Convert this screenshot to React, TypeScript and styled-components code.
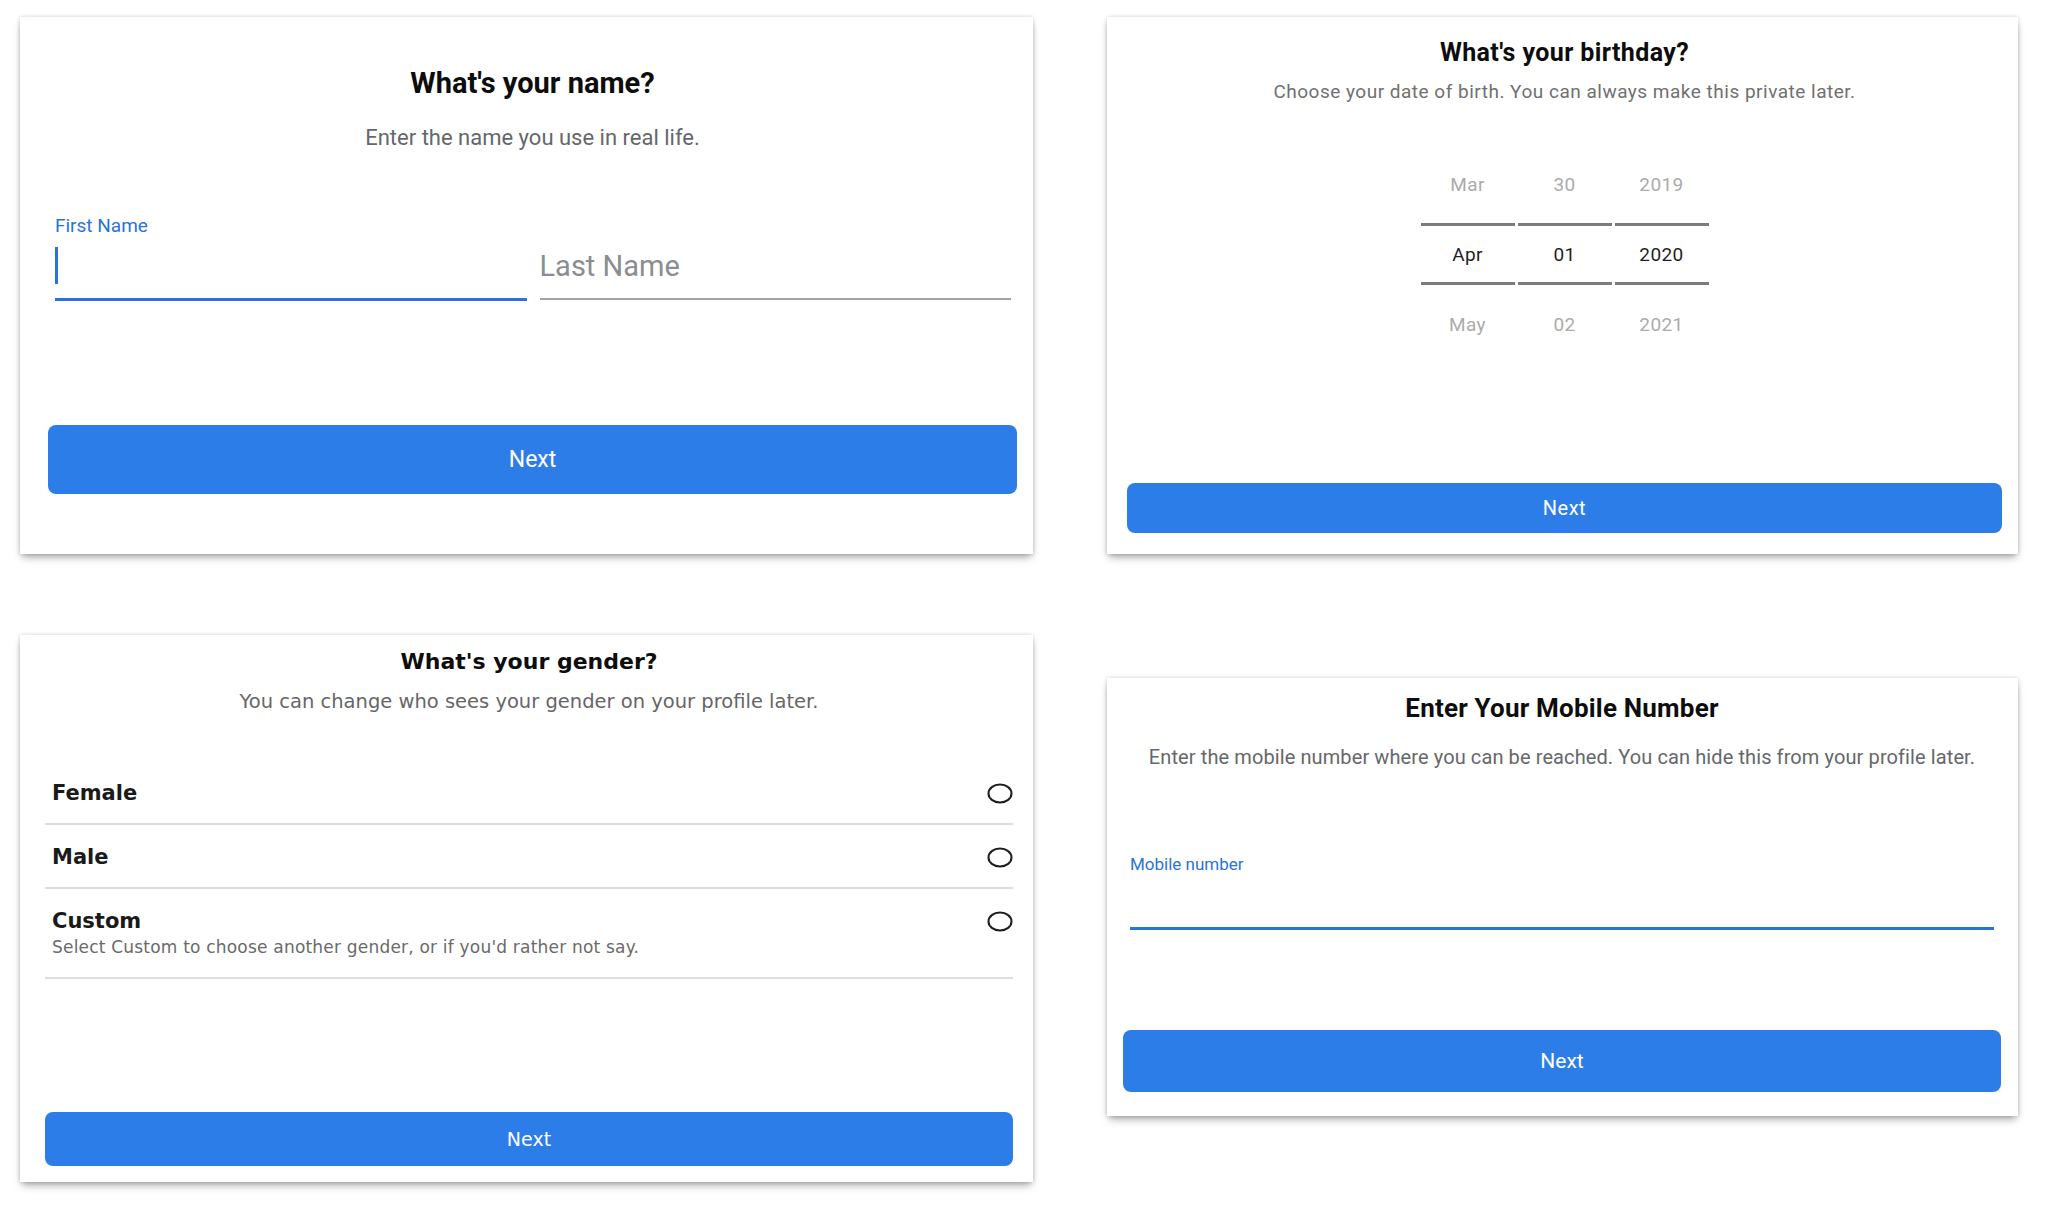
import React from "react";
import styled, { createGlobalStyle } from "styled-components";

const GlobalStyle = createGlobalStyle`
  html, body { margin: 0; padding: 0; background: #ffffff; }
  body { font-family: Roboto, "Liberation Sans", Arial, sans-serif; -webkit-font-smoothing: antialiased; }
  *, *::before, *::after { box-sizing: border-box; }
`;

const BLUE = "#2d7de8";
const ACCENT = "#2b72dc";

const Page = styled.main`
  display: grid;
  grid-template-columns: 1013px 911px;
  column-gap: 74px;
  row-gap: 81px;
  align-items: start;
  align-content: start;
  padding: 17px 0 0 20px;
  width: 2053px;
  min-height: 1222px;
`;

const Card = styled.section<{ $h: number; $pad: string; $offset?: number; $font?: string }>`
  display: flex;
  flex-direction: column;
  height: ${(p) => p.$h}px;
  padding: ${(p) => p.$pad};
  margin-top: ${(p) => p.$offset ?? 0}px;
  background: #ffffff;
  font-family: ${(p) => p.$font ?? 'Roboto, "Liberation Sans", Arial, sans-serif'};
  box-shadow: 0 5px 8px -2px rgba(0, 0, 0, 0.35), 0 0 4px rgba(0, 0, 0, 0.18);
`;

const Title = styled.h2<{ $size: number; $lh: number; $spacing?: number }>`
  margin: 0;
  text-align: center;
  font-weight: 700;
  color: #0d0d0d;
  font-size: ${(p) => p.$size}px;
  line-height: ${(p) => p.$lh}px;
  letter-spacing: ${(p) => p.$spacing ?? 0}px;
`;

const Subtitle = styled.p<{ $size: number; $lh: number; $mt: number; $color?: string; $spacing?: number }>`
  margin: ${(p) => p.$mt}px 0 0;
  text-align: center;
  font-weight: 400;
  color: ${(p) => p.$color ?? "#65676b"};
  font-size: ${(p) => p.$size}px;
  line-height: ${(p) => p.$lh}px;
  letter-spacing: ${(p) => p.$spacing ?? 0}px;
`;

const NextButton = styled.button<{ $h: number; $size: number; $spacing?: number }>`
  margin-top: auto;
  width: 100%;
  height: ${(p) => p.$h}px;
  border: none;
  border-radius: 8px;
  background: ${BLUE};
  color: #ffffff;
  font-family: inherit;
  font-weight: 400;
  font-size: ${(p) => p.$size}px;
  letter-spacing: ${(p) => p.$spacing ?? 0}px;
  cursor: pointer;
`;

/* ---------- name card ---------- */
const NameRow = styled.div`
  display: grid;
  grid-template-columns: 1fr 1fr;
  column-gap: 13px;
  align-items: end;
  margin: 64px 6px 0 7px;
`;

const FieldLabel = styled.label<{ $size: number; $lh: number }>`
  display: block;
  color: ${ACCENT};
  font-size: ${(p) => p.$size}px;
  line-height: ${(p) => p.$lh}px;
`;

const ActiveField = styled.div<{ $h: number; $pt?: number }>`
  display: flex;
  align-items: flex-start;
  height: ${(p) => p.$h}px;
  padding-top: ${(p) => p.$pt ?? 0}px;
  border-bottom: 3px solid ${ACCENT};
`;

const Caret = styled.span`
  display: block;
  width: 3px;
  height: 37px;
  background: ${ACCENT};
`;

const IdleField = styled.div`
  display: flex;
  align-items: flex-start;
  height: 63px;
  padding-top: 12px;
  border-bottom: 2px solid #a3a3a3;
  margin-bottom: 1px;
  color: #8a8d91;
  font-size: 29px;
  line-height: 34px;
`;

/* ---------- birthday card ---------- */
const Picker = styled.div`
  display: flex;
  justify-content: center;
  gap: 3px;
  margin-top: 42px;
`;

const PickerColumn = styled.div`
  display: flex;
  flex-direction: column;
  width: 94px;
`;

const PickerCell = styled.div<{ $selected?: boolean }>`
  display: flex;
  align-items: center;
  justify-content: center;
  height: ${(p) => (p.$selected ? 62 : 78)}px;
  border-top: ${(p) => (p.$selected ? "3px solid #7b7b7b" : "none")};
  border-bottom: ${(p) => (p.$selected ? "3px solid #7b7b7b" : "none")};
  color: ${(p) => (p.$selected ? "#1f1f1f" : "#ababab")};
  font-size: 19px;
  letter-spacing: 0.4px;
`;

/* ---------- gender card ---------- */
const OptionList = styled.div`
  margin-top: 47px;
`;

const OptionRow = styled.div`
  padding: 20px 0 18px 7px;
  border-bottom: 2px solid #dedede;
`;

const OptionHead = styled.div`
  display: flex;
  align-items: center;
  justify-content: space-between;
  height: 24px;
`;

const OptionLabel = styled.span`
  font-size: 21px;
  line-height: 24px;
  font-weight: 700;
  color: #1a1a1a;
`;

const OptionNote = styled.div`
  margin: 4px 0 2px;
  font-size: 17px;
  line-height: 20px;
  letter-spacing: 0.2px;
  color: #6a6a6a;
`;

const RadioMark = styled.svg`
  display: block;
  flex: none;
`;

/* ---------- mobile card ---------- */
const MobileBlock = styled.div`
  margin: 85px 7px 0;
`;

const Radio = () => (
  <RadioMark width="26" height="21" viewBox="0 0 26 21">
    <ellipse cx="13" cy="10.5" rx="11.5" ry="9" fill="none" stroke="#1c1c1c" strokeWidth="2" />
  </RadioMark>
);

const picker = [
  ["Mar", "Apr", "May"],
  ["30", "01", "02"],
  ["2019", "2020", "2021"],
];

const options = [
  { label: "Female" },
  { label: "Male" },
  { label: "Custom", note: "Select Custom to choose another gender, or if you'd rather not say." },
];

export default function App() {
  return (
    <>
      <GlobalStyle />
      <Page>
        <Card $h={537} $pad="49px 16px 60px 28px">
          <Title $size={29} $lh={34}>What's your name?</Title>
          <Subtitle $size={22} $lh={26} $mt={25}>Enter the name you use in real life.</Subtitle>
          <NameRow>
            <div>
              <FieldLabel $size={19} $lh={22}>First Name</FieldLabel>
              <ActiveField $h={64} $pt={10}>
                <Caret />
              </ActiveField>
            </div>
            <IdleField>Last Name</IdleField>
          </NameRow>
          <NextButton $h={69} $size={23}>Next</NextButton>
        </Card>

        <Card $h={537} $pad="21px 16px 21px 20px">
          <Title $size={25} $lh={30} $spacing={0.4}>What's your birthday?</Title>
          <Subtitle $size={19} $lh={22} $mt={13} $color="#707070" $spacing={0.5}>
            Choose your date of birth. You can always make this private later.
          </Subtitle>
          <Picker>
            {picker.map((col) => (
              <PickerColumn key={col[1]}>
                <PickerCell>{col[0]}</PickerCell>
                <PickerCell $selected>{col[1]}</PickerCell>
                <PickerCell>{col[2]}</PickerCell>
              </PickerColumn>
            ))}
          </Picker>
          <NextButton $h={50} $size={20} $spacing={0.5}>Next</NextButton>
        </Card>

        <Card $h={547} $pad="11px 20px 16px 25px" $font='"DejaVu Sans", Verdana, sans-serif'>
          <Title $size={22} $lh={32}>What's your gender?</Title>
          <Subtitle $size={19.5} $lh={24} $mt={12} $color="#666666">
            You can change who sees your gender on your profile later.
          </Subtitle>
          <OptionList>
            {options.map((o) => (
              <OptionRow key={o.label}>
                <OptionHead>
                  <OptionLabel>{o.label}</OptionLabel>
                  <Radio />
                </OptionHead>
                {o.note && <OptionNote>{o.note}</OptionNote>}
              </OptionRow>
            ))}
          </OptionList>
          <NextButton $h={54} $size={19}>Next</NextButton>
        </Card>

        <Card $h={438} $offset={43} $pad="15px 17px 24px 16px">
          <Title $size={26} $lh={30} $spacing={0.2}>Enter Your Mobile Number</Title>
          <Subtitle $size={20} $lh={24} $mt={22} $spacing={0.1}>
            Enter the mobile number where you can be reached. You can hide this from your profile later.
          </Subtitle>
          <MobileBlock>
            <FieldLabel $size={17} $lh={20}>Mobile number</FieldLabel>
            <ActiveField $h={56} />
          </MobileBlock>
          <NextButton $h={62} $size={21}>Next</NextButton>
        </Card>
      </Page>
    </>
  );
}
